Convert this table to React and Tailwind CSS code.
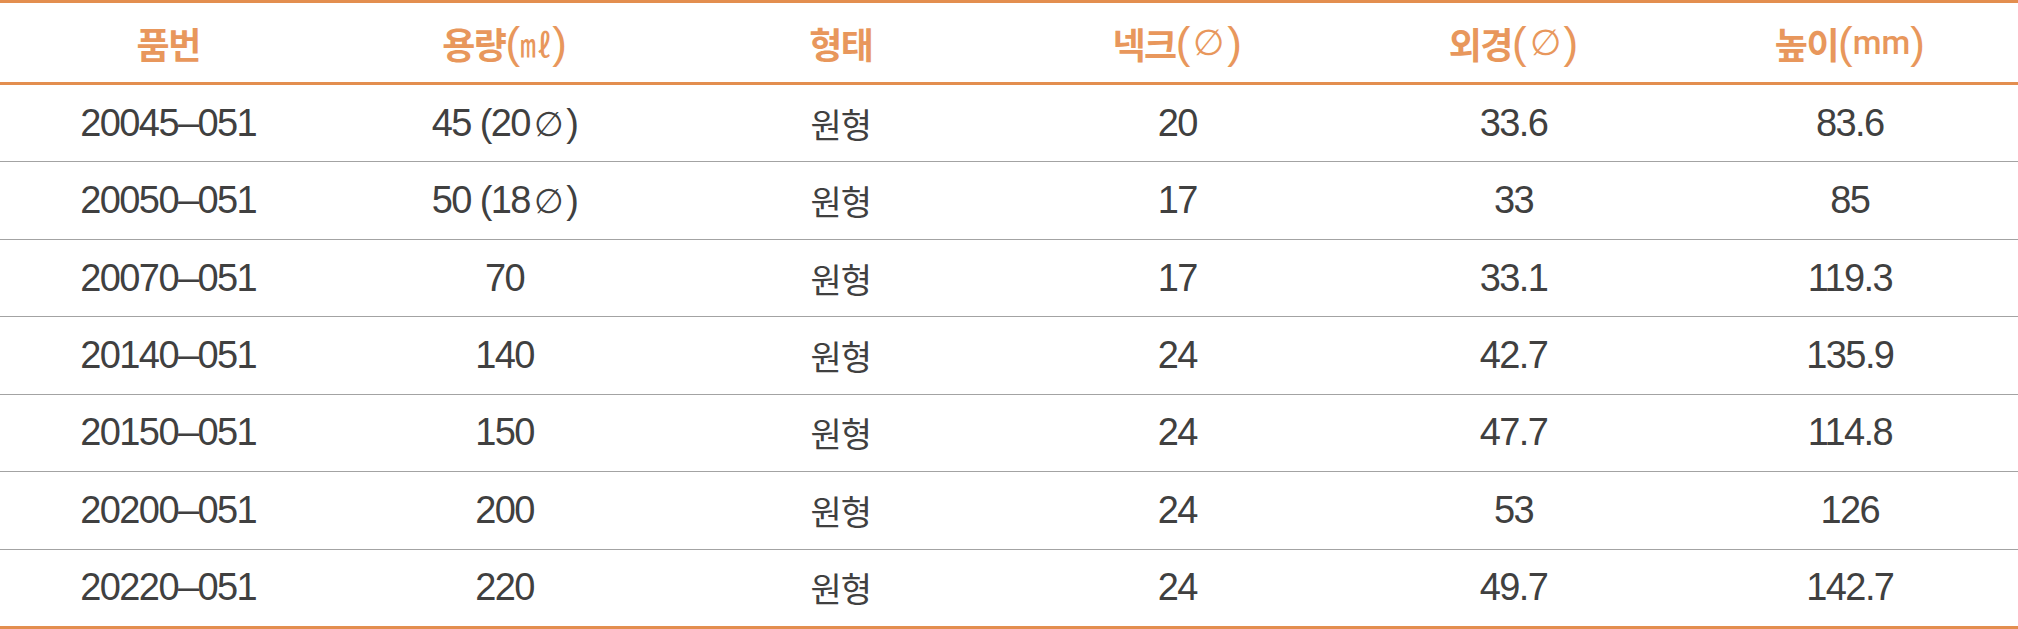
const headers = [
  { ko: "품번" },
  { ko: "용량", unit: "㎖" },
  { ko: "형태" },
  { ko: "넥크", unit: "∅" },
  { ko: "외경", unit: "∅" },
  { ko: "높이", unit: "mm" },
];

const rows = [
  ["20045–051", "45 (20∅)", "원형", "20", "33.6", "83.6"],
  ["20050–051", "50 (18∅)", "원형", "17", "33", "85"],
  ["20070–051", "70", "원형", "17", "33.1", "119.3"],
  ["20140–051", "140", "원형", "24", "42.7", "135.9"],
  ["20150–051", "150", "원형", "24", "47.7", "114.8"],
  ["20200–051", "200", "원형", "24", "53", "126"],
  ["20220–051", "220", "원형", "24", "49.7", "142.7"],
];

function Unit({ unit }) {
  if (unit === "∅") {
    return <span className="mx-[3px] font-['DejaVu_Sans',sans-serif] text-[36px] font-extralight leading-none">∅</span>;
  }
  if (unit === "mm") {
    return <span className="font-['Roboto',sans-serif] text-[33px] font-medium leading-none">mm</span>;
  }
  return <span className="font-['Noto_Sans_CJK_KR',sans-serif] text-[32px] leading-none">{unit}</span>;
}

function Cell({ text }) {
  const parts = text.split("∅");
  if (parts.length === 1) return text;
  return (
    <>
      {parts[0]}
      <span className="mx-[4px] font-['DejaVu_Sans',sans-serif] text-[34px] font-extralight">∅</span>
      {parts[1]}
    </>
  );
}

export default function App() {
  return (
    <div className="flex h-[629px] w-[2018px] flex-col bg-white font-['Liberation_Sans','Noto_Sans_CJK_KR',sans-serif]">
      <div className="grid h-[85px] shrink-0 grid-cols-6 items-center border-y-[3px] border-[#e38e4f]">
        {headers.map((h) => (
          <div key={h.ko} className="flex items-center justify-center text-[#e8975c]">
            <span className="font-['Noto_Sans_CJK_KR',sans-serif] text-[36px] font-bold tracking-[-1.5px]">{h.ko}</span>
            {h.unit ? (
              <span className="flex items-center">
                <span className="font-['Liberation_Sans',sans-serif] text-[44px] leading-none">(</span>
                <Unit unit={h.unit} />
                <span className="font-['Liberation_Sans',sans-serif] text-[44px] leading-none">)</span>
              </span>
            ) : null}
          </div>
        ))}
      </div>

      <div className="flex flex-1 flex-col border-b-[3px] border-[#e38e4f]">
        {rows.map((row, i) => (
          <div
            key={row[0]}
            className={[
              "grid flex-1 grid-cols-6 items-center text-[#404040]",
              i < rows.length - 1 ? "border-b border-[#a3a3a3]" : "",
            ].join(" ")}
          >
            {row.map((cell, j) => (
              <div
                key={j}
                className={
                  j === 2
                    ? "text-center font-['Noto_Sans_CJK_KR',sans-serif] text-[34px] tracking-[-1px]"
                    : "text-center text-[38px] tracking-[-1.6px]"
                }
              >
                <Cell text={cell} />
              </div>
            ))}
          </div>
        ))}
      </div>
    </div>
  );
}
